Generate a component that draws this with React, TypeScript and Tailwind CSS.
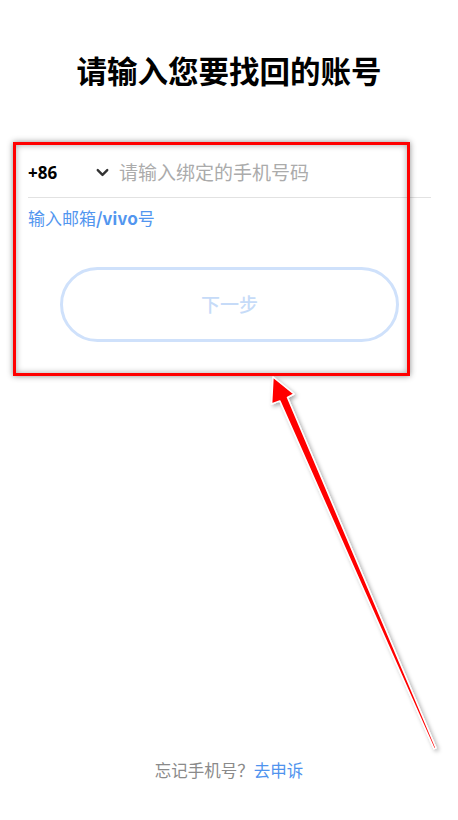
import { ChevronDown } from 'lucide-react';

const CJK = { fontFamily: '"Noto Sans CJK SC", "Noto Sans", sans-serif' };

function Arrow() {
  // tip (273,377) -> tail (435,748)
  const pts = '273,377 294,394 287.5,397.5 436,748 434,748.6 279.8,400.9 271.6,404';
  return (
    <svg className="pointer-events-none absolute left-0 top-0" width="458" height="820">
      <defs>
        <filter id="sh" x="-20%" y="-20%" width="140%" height="140%">
          <feDropShadow dx="2" dy="2" stdDeviation="2" floodColor="#000" floodOpacity="0.35" />
        </filter>
      </defs>
      <polygon points={pts} fill="#ff0000" stroke="#ffffff" strokeWidth="1.5" strokeLinejoin="round" filter="url(#sh)" />
    </svg>
  );
}

export default function App() {
  return (
    <div className="relative flex h-[820px] w-[458px] flex-col overflow-hidden bg-white" style={CJK}>
      <h1 className="mt-[50px] text-center text-[30.5px] font-bold leading-[40px] text-black">
        请输入您要找回的账号
      </h1>

      {/* form */}
      <div className="mt-[58px] pl-[28px] pr-[27px]">
        <div className="flex h-[50px] items-center border-b border-[#e2e2e2]">
          <span className="w-[66px] text-[17px] font-bold text-black" style={{ fontFamily: '"Noto Sans", sans-serif' }}>
            +86
          </span>
          <ChevronDown size={19} strokeWidth={3} className="-ml-[1px] text-[#333]" />
          <span className="ml-[7px] text-[19px] text-[#ababab]">请输入绑定的手机号码</span>
        </div>
        <div className="mt-[8px] text-[17px] leading-[24px] text-[#5296ef]">
          输入邮箱<span className="font-semibold">/vivo</span>号
        </div>
        <div className="ml-[32px] mt-[37px] flex h-[75px] w-[339px] items-center justify-center rounded-full border-[3px] border-[#cfe1fb]">
          <span className="text-[19px] font-medium text-[#c6dbf8]">下一步</span>
        </div>
      </div>

      {/* annotation box */}
      <div className="pointer-events-none absolute left-[13px] top-[142px] h-[234px] w-[397px] border-[3px] border-[#ff0000] shadow-[0_0_6px_rgba(0,0,0,0.45),inset_0_0_6px_rgba(0,0,0,0.35)]" />

      <div className="mt-auto pb-[38px] text-center text-[16.5px] leading-[24px]">
        <span className="text-[#8a8a8a]">忘记手机号？</span>
        <span className="text-[#4f93ee]">去申诉</span>
      </div>

      <Arrow />
    </div>
  );
}
